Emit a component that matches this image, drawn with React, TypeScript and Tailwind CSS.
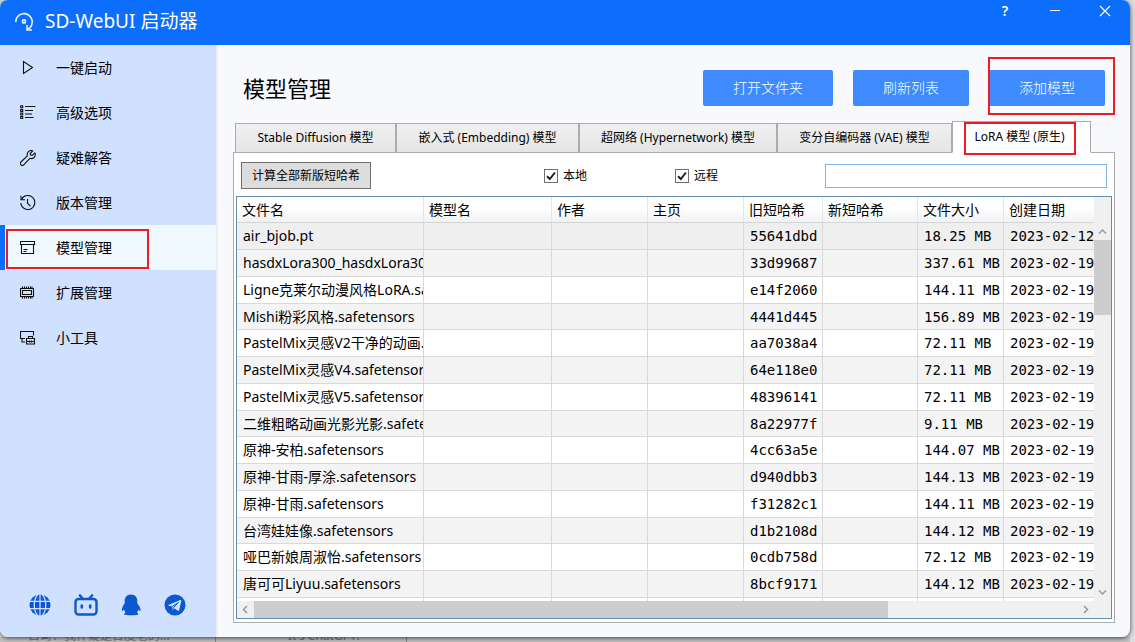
import { useState, ReactNode } from 'react';

interface Model {
    name: string;
    hash: string;
    size: string;
    date: string;
}

const MODELS: Model[] = [
    { name: 'air_bjob.pt', hash: '55641dbd', size: '18.25 MB', date: '2023-02-12' },
    { name: 'hasdxLora300_hasdxLora300.safetensors', hash: '33d99687', size: '337.61 MB', date: '2023-02-19' },
    { name: 'Ligne克莱尔动漫风格LoRA.safetensors', hash: 'e14f2060', size: '144.11 MB', date: '2023-02-19' },
    { name: 'Mishi粉彩风格.safetensors', hash: '4441d445', size: '156.89 MB', date: '2023-02-19' },
    { name: 'PastelMix灵感V2干净的动画.safetensors', hash: 'aa7038a4', size: '72.11 MB', date: '2023-02-19' },
    { name: 'PastelMix灵感V4.safetensors', hash: '64e118e0', size: '72.11 MB', date: '2023-02-19' },
    { name: 'PastelMix灵感V5.safetensors', hash: '48396141', size: '72.11 MB', date: '2023-02-19' },
    { name: '二维粗略动画光影光影.safetensors', hash: '8a22977f', size: '9.11 MB', date: '2023-02-19' },
    { name: '原神-安柏.safetensors', hash: '4cc63a5e', size: '144.07 MB', date: '2023-02-19' },
    { name: '原神-甘雨-厚涂.safetensors', hash: 'd940dbb3', size: '144.13 MB', date: '2023-02-19' },
    { name: '原神-甘雨.safetensors', hash: 'f31282c1', size: '144.11 MB', date: '2023-02-19' },
    { name: '台湾娃娃像.safetensors', hash: 'd1b2108d', size: '144.12 MB', date: '2023-02-19' },
    { name: '哑巴新娘周淑怡.safetensors', hash: '0cdb758d', size: '72.12 MB', date: '2023-02-19' },
    { name: '唐可可Liyuu.safetensors', hash: '8bcf9171', size: '144.12 MB', date: '2023-02-19' },
    { name: '', hash: '', size: '', date: '' },
];

const COLUMNS = [
    { label: '文件名', width: 'w-[187px]' },
    { label: '模型名', width: 'w-[128px]' },
    { label: '作者', width: 'w-[96px]' },
    { label: '主页', width: 'w-[96px]' },
    { label: '旧短哈希', width: 'w-[79px]' },
    { label: '新短哈希', width: 'w-[95px]' },
    { label: '文件大小', width: 'w-[86px]' },
    { label: '创建日期', width: '' },
];

const TABS = [
    { label: 'Stable Diffusion 模型', width: 'w-[161px]' },
    { label: '嵌入式 (Embedding) 模型', width: 'w-[183px]' },
    { label: '超网络 (Hypernetwork) 模型', width: 'w-[198px]' },
    { label: '变分自编码器 (VAE) 模型', width: 'w-[175px]' },
    { label: 'LoRA 模型 (原生)', width: 'w-[139px]' },
];

function LineIcon({ children }: { children: ReactNode }) {
    return (
        <svg width="16" height="16" viewBox="0 0 16 16" fill="none" stroke="#111111" strokeWidth="1.100" aria-hidden="true">
            {children}
        </svg>
    );
}

const NAV = [
    {
        label: '一键启动',
        icon: <path d="M3.500 1.500v12L12.500 7.500z" />,
    },
    {
        label: '高级选项',
        icon: (
            <>
                <path d="M5 1.500h10.500M5 5.500h8M5 9h7M5 12.500h8.500" />
                <path d="M.7.800h2v2h-2zM.7 4.500h2v2h-2zM.7 8h2v2h-2zM.7 11.500h2v2h-2z" />
            </>
        ),
    },
    {
        label: '疑难解答',
        icon: (
            <path d="M12.800.9a4 4 0 0 0-5.400 4.900L.9 12a1.900 1.900 0 0 0 2.800 2.800l6.200-6.500a4 4 0 0 0 5-5.400l-2.600 2.500-1.700-.4-.4-1.500z" strokeLinejoin="round" />
        ),
    },
    {
        label: '版本管理',
        icon: (
            <>
                <path d="M1.500 4.400A7 7 0 1 1 .8 8" />
                <path d="M1 .8v4h4M7.500 4v4.300l3 2.700" />
            </>
        ),
    },
    {
        label: '模型管理',
        icon: (
            <>
                <path d="M.5 1.500h14v3H.5zM1.500 4.500v9h12v-9" />
                <path d="M3.500 9.500h4M3.500 11.500h3" />
            </>
        ),
    },
    {
        label: '扩展管理',
        icon: (
            <>
                <path d="M.5 3.500h13v8H.5zM2.500 5.500h9v4h-9z" />
                <path d="M2.500 1.500v2M4.500 1.500v2M6.500 1.500v2M8.500 1.500v2M10.500 1.500v2M12 1.500v2M2.500 11.500v2M4.500 11.500v2M6.500 11.500v2M8.500 11.500v2M10.500 11.500v2M12 11.500v2" />
            </>
        ),
    },
    {
        label: '小工具',
        icon: (
            <>
                <path d="M5 8.500H.5v-7h13v4M2 8.500v3.500h3" />
                <path d="M6.500 8.500h8v5.500h-8zM8.500 8.500v-2h4v2M6.500 11.500h8M9.500 10.500v2M11.500 10.500v2" />
            </>
        ),
    },
];

const SOCIAL = [
    {
        label: '官网',
        icon: (
            <svg width="22" height="22" viewBox="0 0 22 22" aria-hidden="true">
                <circle cx="11" cy="11" r="10.500" fill="#0d58d0" />
                <path d="M0 7.300h22M0 14.700h22M11 0v22M9 0C4 6 4 16 9 22M13 0C18 6 18 16 13 22" fill="none" stroke="#cfe1ff" strokeWidth="1.200" />
            </svg>
        ),
    },
    {
        label: 'Bilibili',
        icon: (
            <svg width="24" height="22" viewBox="0 0 24 22" fill="none" stroke="#0d58d0" aria-hidden="true">
                <rect x="1.500" y="5" width="21" height="15.500" rx="3" strokeWidth="2.400" />
                <path d="M6 1.500l2.500 3M18 1.500l-2.500 3" strokeWidth="2.600" strokeLinecap="round" />
                <path d="M7.800 11.500v2M16.200 11.500v2" strokeWidth="2.600" strokeLinecap="round" />
            </svg>
        ),
    },
    {
        label: 'QQ',
        icon: (
            <svg width="20" height="22" viewBox="0 0 20 22" fill="#0d58d0" aria-hidden="true">
                <path d="M10 .5C6 .5 3.700 3.300 3.700 7v2.300C2 11.600.8 14 .9 16.200c.1 1.400 1.200.6 2-.7.3 1.100.9 2.100 1.700 2.900-1.300.6-1.500 1.400-1.200 2.100.5 1 13.200 1 13.700 0 .3-.7.100-1.500-1.200-2.100.8-.8 1.400-1.800 1.700-2.900.8 1.300 1.900 2.100 2 .7.1-2.200-1.600-4.600-3.300-6.900V7C16.300 3.300 14 .5 10 .5z" />
            </svg>
        ),
    },
    {
        label: 'Telegram',
        icon: (
            <svg width="22" height="22" viewBox="0 0 22 22" aria-hidden="true">
                <circle cx="11" cy="11" r="10.500" fill="#0d58d0" />
                <path d="M4.300 10.900L16.300 6c.7-.2 1.200.2 1 1.100l-2.100 9c-.2.800-.7 1-1.300.6l-3.200-2.300-1.500 1.500c-.3.300-.7.300-.7-.2l-.4-3.100-3.700-1.200c-.5-.2-.5-.4-.1-.5z" fill="#cfe1ff" />
                <path d="M8.200 12.500l6.300-4-5.200 5.300-.3 2.200" fill="none" stroke="#0d58d0" strokeWidth="1" />
            </svg>
        ),
    },
];

function Chevron({ d }: { d: string }) {
    return (
        <svg width="9" height="9" viewBox="0 0 9 9" fill="none" stroke="#9a9a9a" strokeWidth="1.500" aria-hidden="true">
            <path d={d} />
        </svg>
    );
}

// red frame drawn around the steps of the tutorial
function Mark({ className }: { className: string }) {
    return <span className={`pointer-events-none absolute z-10 border-2 border-[#ec1c24] ${className}`} />;
}

function Check({ label, checked, onChange }: { label: string; checked: boolean; onChange: () => void }) {
    return (
        <label className="flex w-[131px] items-center gap-[5px] text-xs">
            <span className="relative flex">
                <input
                    type="checkbox"
                    checked={checked}
                    onChange={onChange}
                    className="size-[14px] appearance-none border border-[#707070] bg-white"
                />
                {checked && (
                    <svg width="14" height="14" viewBox="0 0 14 14" className="pointer-events-none absolute inset-0" fill="none" stroke="#212121" strokeWidth="2" aria-hidden="true">
                        <path d="M3 7.200l2.800 2.800L11 3.500" />
                    </svg>
                )}
            </span>
            {label}
        </label>
    );
}

export default function App() {
    const [nav, setNav] = useState('模型管理');
    const [tab, setTab] = useState('LoRA 模型 (原生)');
    const [local, setLocal] = useState(true);
    const [remote, setRemote] = useState(true);
    const [search, setSearch] = useState('');

    return (
        <div className="flex h-screen flex-col overflow-hidden bg-[#dedede] pr-[5px] font-['Noto_Sans','Noto_Sans_CJK_SC',sans-serif] text-black">
            <div className="z-10 flex min-h-0 flex-1 flex-col overflow-hidden rounded-lg bg-[#f7f9fc] shadow-[0_1px_5px_rgba(0,0,0,0.7)]">
                {/* Title bar */}
                <header className="flex h-[45px] shrink-0 items-start justify-between bg-[#0d6efd] pl-[14px] text-white">
                    <div className="flex h-[43px] items-center gap-[11px]">
                        <svg width="20" height="20" viewBox="0 0 20 20" fill="none" stroke="#e8f1ff" strokeWidth="1.600" aria-hidden="true">
                            <path d="M1.700 10A8.300 8.300 0 1 1 13.500 17.500" />
                            <path d="M13 13v5h5" />
                            <circle cx="10" cy="9.500" r="1.600" />
                        </svg>
                        <h1 className="text-[19px]">SD-WebUI 启动器</h1>
                    </div>
                    <div className="flex">
                        <button className="h-[22px] w-[50px] text-sm font-semibold leading-[22px]" aria-label="帮助">?</button>
                        <button className="flex h-[22px] w-[50px] items-center justify-center" aria-label="最小化">
                            <svg width="12" height="12" viewBox="0 0 12 12" stroke="white" aria-hidden="true"><path d="M1 5.500h10" /></svg>
                        </button>
                        <button className="flex h-[22px] w-[50px] items-center justify-center" aria-label="关闭">
                            <svg width="12" height="12" viewBox="0 0 12 12" stroke="white" strokeWidth="1.200" aria-hidden="true"><path d="M1 1l10 10M11 1L1 11" /></svg>
                        </button>
                    </div>
                </header>

                <div className="flex min-h-0 flex-1">
                    {/* Sidebar */}
                    <aside className="flex w-[218px] shrink-0 flex-col justify-between border-r-2 border-[#eeeeee] bg-[#cfe1ff]">
                        <nav className="flex flex-col">
                            {NAV.map((item) => (
                                <button
                                    key={item.label}
                                    onClick={() => setNav(item.label)}
                                    className={`relative flex h-[45px] items-center gap-5 border-l-[5px] pl-[15px] text-sm ${
                                        nav === item.label ? 'border-[#0d6efd] bg-[#f0f8ff]' : 'border-transparent'
                                    }`}
                                >
                                    <LineIcon>{item.icon}</LineIcon>
                                    {item.label}
                                    {item.label === '模型管理' && <Mark className="left-px top-1 h-10 w-[143px]" />}
                                </button>
                            ))}
                        </nav>
                        <div className="flex h-[65px] items-center gap-[23px] pl-[29px]">
                            {SOCIAL.map((s) => (
                                <a key={s.label} href="#" aria-label={s.label}>{s.icon}</a>
                            ))}
                        </div>
                    </aside>

                    {/* Content */}
                    <main className="flex min-w-0 flex-1 flex-col pb-[14px] pl-[15px] pr-[15px]">
                        <div className="flex h-[76px] shrink-0 items-center justify-between pl-[10px] pr-[10px] pt-[10px]">
                            <h2 className="text-[22px] leading-9">模型管理</h2>
                            <div className="flex gap-5 text-sm text-white">
                                <button className="h-9 rounded-[2px] bg-[#3d8bff] px-[30px] font-light">打开文件夹</button>
                                <button className="h-9 rounded-[2px] bg-[#3d8bff] px-[30px] font-light">刷新列表</button>
                                <button className="relative h-9 rounded-[2px] bg-[#3d8bff] px-[30px] font-light">
                                    添加模型
                                    <Mark className="-left-px -top-[13px] h-[58px] w-[127px]" />
                                </button>
                            </div>
                        </div>

                        <div role="tablist" className="z-10 -mb-px flex h-8 shrink-0 items-end pl-[2px] text-xs">
                            {TABS.map((t) => (
                                <button
                                    key={t.label}
                                    role="tab"
                                    aria-selected={tab === t.label}
                                    onClick={() => setTab(t.label)}
                                    className={`relative whitespace-nowrap border border-[#acacac] ${t.width} ${
                                        tab === t.label
                                            ? 'h-8 border-b-white bg-white pr-1'
                                            : 'h-[30px] bg-linear-to-b from-[#f0f0f0] to-[#e5e5e5]'
                                    }`}
                                >
                                    {t.label}
                                    {t.label === 'LoRA 模型 (原生)' && <Mark className="left-[11px] top-0 h-[33px] w-[112px]" />}
                                </button>
                            ))}
                        </div>

                        <section className="flex min-h-0 flex-1 flex-col border border-[#acacac] bg-white px-[2px] pb-[3px]">
                            <div className="flex h-[43px] shrink-0 items-center pl-[5px] pr-[5px] pt-[2px]">
                                <button className="h-[27px] w-[130px] border border-[#707070] bg-[#dddddd] text-xs">计算全部新版短哈希</button>
                                <div className="ml-[173px] flex">
                                    <Check label="本地" checked={local} onChange={() => setLocal(!local)} />
                                    <Check label="远程" checked={remote} onChange={() => setRemote(!remote)} />
                                </div>
                                <input
                                    type="text"
                                    aria-label="搜索"
                                    value={search}
                                    onChange={(e) => setSearch(e.target.value)}
                                    className="ml-auto h-6 w-[282px] border border-[#7eb4ea] bg-white px-1 text-xs outline-none"
                                />
                            </div>

                            <div className="flex min-h-0 flex-1 flex-col border border-[#688caf]">
                                <div className="flex min-h-0 flex-1">
                                    <div className="min-w-0 flex-1 overflow-hidden">
                                        <table className="w-full table-fixed border-separate border-spacing-0 text-left text-sm leading-5">
                                            <thead>
                                                <tr className="h-[26px] bg-linear-to-b from-white from-45% to-[#f0f1f4]">
                                                    {COLUMNS.map((c) => (
                                                        <th key={c.label} className={`border-b border-r border-b-[#d5d5d5] border-r-[#e4e5e8] px-[5px] py-0 font-normal last:border-r-0 ${c.width}`}>
                                                            {c.label}
                                                        </th>
                                                    ))}
                                                </tr>
                                            </thead>
                                            <tbody>
                                                {MODELS.map((m, i) => (
                                                    <tr
                                                        key={m.name}
                                                        className={`${i % 4 === 3 ? 'h-[26px]' : 'h-[27px]'} ${
                                                            i === 0 ? 'bg-[#efefef]' : i % 2 ? 'bg-[#f4f4f4]' : 'bg-white'
                                                        } *:overflow-hidden *:whitespace-nowrap *:border-b *:border-r *:border-[#d9d9d9] *:py-0 *:pl-[6px]`}
                                                    >
                                                        <td>{m.name}</td>
                                                        <td></td>
                                                        <td></td>
                                                        <td></td>
                                                        <td className="font-['DejaVu_Sans_Mono',monospace]">{m.hash}</td>
                                                        <td></td>
                                                        <td className="font-['DejaVu_Sans_Mono',monospace]">{m.size}</td>
                                                        <td className="border-r-0! font-['DejaVu_Sans_Mono',monospace]">{m.date}</td>
                                                    </tr>
                                                ))}
                                            </tbody>
                                        </table>
                                    </div>
                                    {/* Vertical scrollbar */}
                                    <div className="flex w-[17px] shrink-0 flex-col items-center bg-[#f0f0f0] pt-[26px]">
                                        <div className="flex h-[17px] items-center"><Chevron d="M1 6.500L4.500 3 8 6.500" /></div>
                                        <div className="h-[75px] w-full bg-[#cdcdcd]" />
                                        <div className="mt-auto flex h-[17px] items-center"><Chevron d="M1 2.500L4.500 6 8 2.500" /></div>
                                    </div>
                                </div>
                                {/* Horizontal scrollbar */}
                                <div className="flex h-[17px] shrink-0 bg-[#f0f0f0] pr-[17px]">
                                    <div className="flex w-[17px] items-center justify-center"><Chevron d="M6 1L2.500 4.500 6 8" /></div>
                                    <div className="flex-1"><div className="h-full w-[77%] bg-[#cdcdcd]" /></div>
                                    <div className="flex w-[17px] items-center justify-center"><Chevron d="M3 1l3.500 3.500L3 8" /></div>
                                </div>
                            </div>
                        </section>
                    </main>
                </div>
            </div>

            {/* Chat list of the window behind */}
            <div className="flex h-[5px] shrink-0 items-end overflow-hidden bg-[#c4c4c4] pl-7 text-xs leading-3 text-[#777777]">
                <span className="w-[187px] shrink-0">占哥：我怀疑是百度老的...</span>
                <span className="w-[192px] shrink-0 border-x border-[#8a8a8a] pl-[72px]">It's ChatGPT!</span>
            </div>
        </div>
    );
}
